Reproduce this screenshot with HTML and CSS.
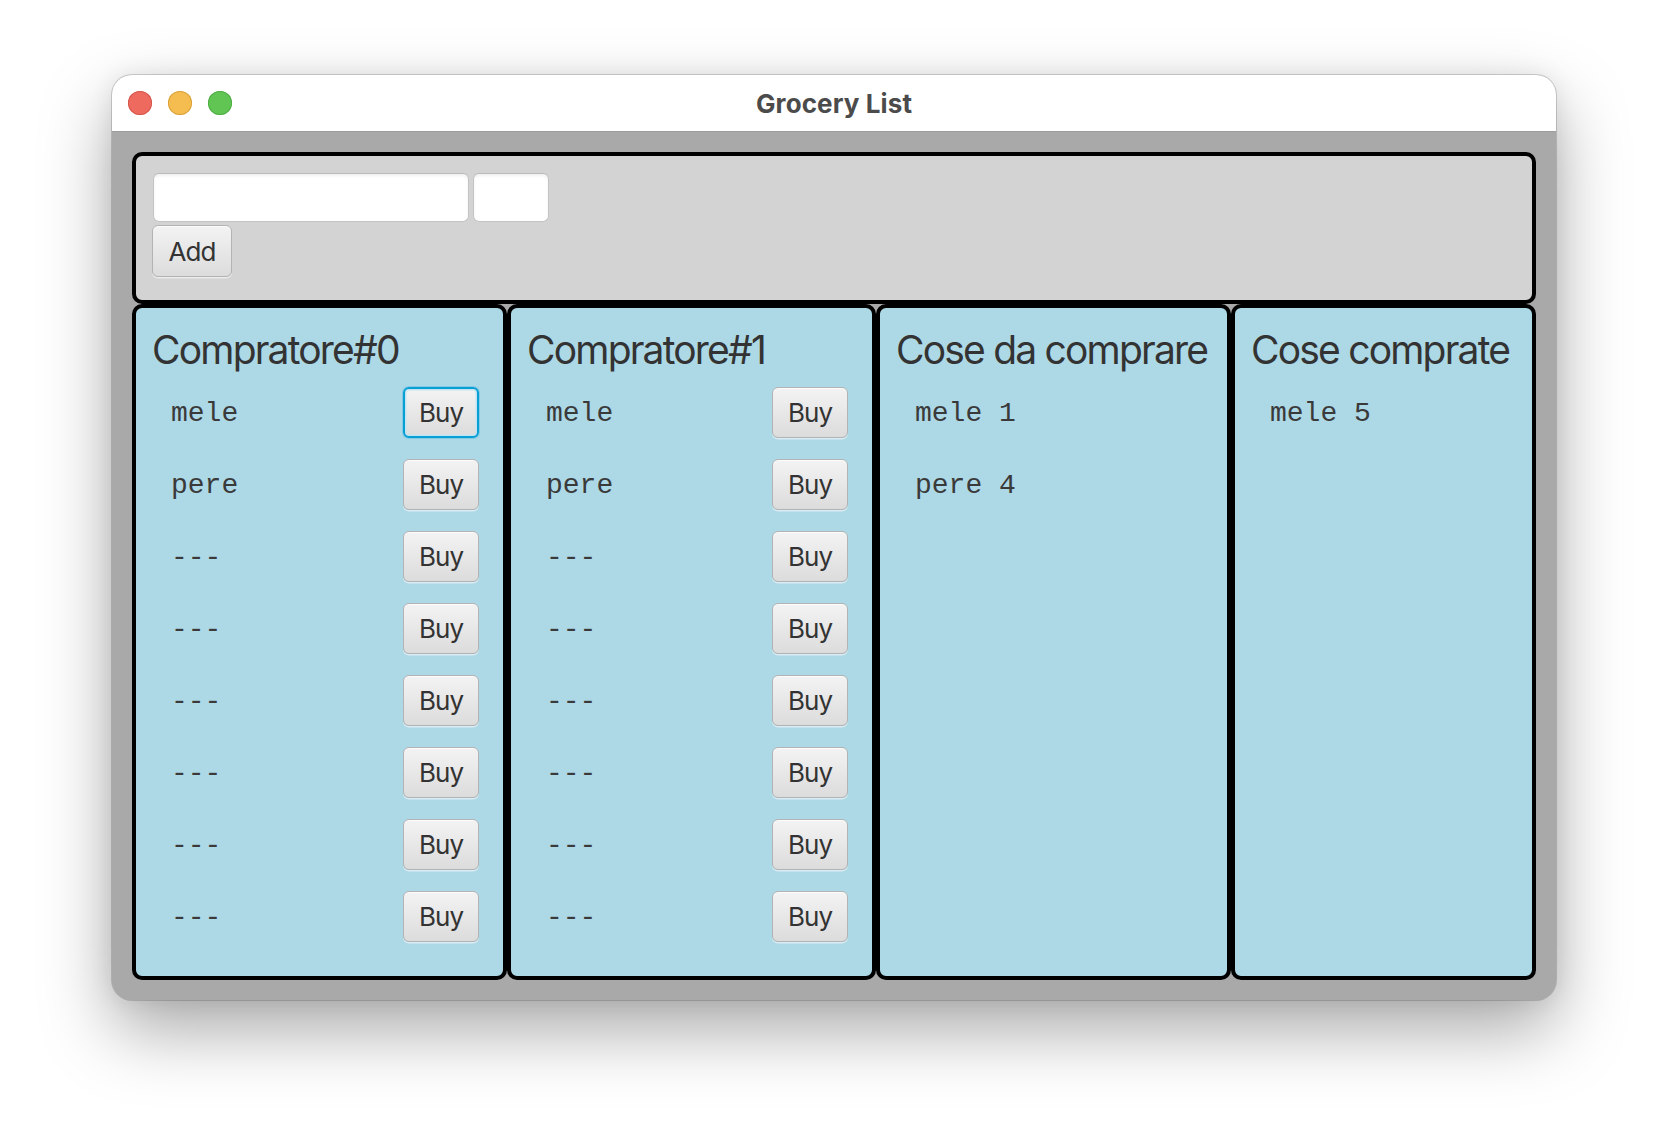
FILE: index.html
```
<!DOCTYPE html>
<html lang="it">
<head>
<meta charset="utf-8">
<title>Grocery List</title>
<link rel="stylesheet" href="styles.css">
</head>
<body>
<div class="window">
  <div class="titlebar">
    <div class="lights">
      <span class="light light-red"></span>
      <span class="light light-yellow"></span>
      <span class="light light-green"></span>
    </div>
    <div class="window-title">Grocery List</div>
    <div class="titlebar-spacer"></div>
  </div>
  <div class="content">
    <div class="top-panel">
      <div class="fields">
        <input class="field field-name" type="text">
        <input class="field field-qty" type="text">
      </div>
      <button class="btn btn-add">Add</button>
    </div>
    <div class="columns">
      <section class="panel panel-buyer0">
        <h2 class="panel-title">Compratore#0</h2>
        <div class="rows">
          <div class="row"><span class="item">mele</span><button class="btn btn-buy btn-focused">Buy</button></div>
          <div class="row"><span class="item">pere</span><button class="btn btn-buy">Buy</button></div>
          <div class="row"><span class="item">---</span><button class="btn btn-buy">Buy</button></div>
          <div class="row"><span class="item">---</span><button class="btn btn-buy">Buy</button></div>
          <div class="row"><span class="item">---</span><button class="btn btn-buy">Buy</button></div>
          <div class="row"><span class="item">---</span><button class="btn btn-buy">Buy</button></div>
          <div class="row"><span class="item">---</span><button class="btn btn-buy">Buy</button></div>
          <div class="row"><span class="item">---</span><button class="btn btn-buy">Buy</button></div>
        </div>
      </section>
      <section class="panel panel-buyer1">
        <h2 class="panel-title">Compratore#1</h2>
        <div class="rows">
          <div class="row"><span class="item">mele</span><button class="btn btn-buy">Buy</button></div>
          <div class="row"><span class="item">pere</span><button class="btn btn-buy">Buy</button></div>
          <div class="row"><span class="item">---</span><button class="btn btn-buy">Buy</button></div>
          <div class="row"><span class="item">---</span><button class="btn btn-buy">Buy</button></div>
          <div class="row"><span class="item">---</span><button class="btn btn-buy">Buy</button></div>
          <div class="row"><span class="item">---</span><button class="btn btn-buy">Buy</button></div>
          <div class="row"><span class="item">---</span><button class="btn btn-buy">Buy</button></div>
          <div class="row"><span class="item">---</span><button class="btn btn-buy">Buy</button></div>
        </div>
      </section>
      <section class="panel panel-todo">
        <h2 class="panel-title">Cose da comprare</h2>
        <div class="rows">
          <div class="row"><span class="item">mele 1</span></div>
          <div class="row"><span class="item">pere 4</span></div>
        </div>
      </section>
      <section class="panel panel-done">
        <h2 class="panel-title">Cose comprate</h2>
        <div class="rows">
          <div class="row"><span class="item">mele 5</span></div>
        </div>
      </section>
    </div>
  </div>
</div>
</body>
</html>
```
FILE: styles.css
```
* {
  box-sizing: border-box;
}

html, body {
  margin: 0;
  background: #ffffff;
}

body {
  padding: 75px 0 0 112px;
  height: 1148px;
  overflow: hidden;
  font-family: Inter, "Noto Sans", sans-serif;
}

.window {
  width: 1444px;
  height: 925px;
  border-radius: 20px;
  overflow: hidden;
  background: #a9a9a9;
  box-shadow: 0 0 0 1px rgba(0, 0, 0, 0.16), 0 30px 70px rgba(0, 0, 0, 0.34), 0 0 24px rgba(0, 0, 0, 0.08);
}

.titlebar {
  height: 57px;
  background: #ffffff;
  border-bottom: 1px solid #9c9c9c;
  display: grid;
  grid-template-columns: 1fr auto 1fr;
  align-items: center;
  padding: 0 16px;
}

.lights {
  display: flex;
  gap: 16px;
}

.light {
  width: 24px;
  height: 24px;
  border-radius: 50%;
}

.light-red {
  background: #ee6a5f;
  box-shadow: inset 0 0 0 1px #d5574c;
}

.light-yellow {
  background: #f5bd4f;
  box-shadow: inset 0 0 0 1px #d9a23c;
}

.light-green {
  background: #61c554;
  box-shadow: inset 0 0 0 1px #4fad43;
}

.window-title {
  font-size: 26px;
  font-weight: 700;
  letter-spacing: 0.1px;
  color: #4b4b4b;
}

.content {
  padding: 20px;
}

.top-panel {
  height: 152px;
  background: #d3d3d3;
  border: 4px solid #000000;
  border-radius: 10px;
  padding: 17px 17px 0 16px;
  display: flex;
  flex-direction: column;
  align-items: flex-start;
  gap: 3px;
}

.fields {
  display: flex;
  gap: 4px;
  padding-left: 1px;
}

.field {
  height: 49px;
  margin: 0;
  border: 1px solid #c4c4c4;
  border-top-color: #b8b8b8;
  border-radius: 6px;
  background: #ffffff;
  box-shadow: inset 0 2px 3px rgba(0, 0, 0, 0.06);
  outline: none;
  font-family: Inter, sans-serif;
  font-size: 26px;
}

.field-name {
  width: 316px;
}

.field-qty {
  width: 76px;
}

.columns {
  display: flex;
  height: 676px;
}

.panel {
  flex: none;
  background: #add8e6;
  border: 4px solid #000000;
  border-radius: 10px;
  padding: 18px 24px 0 16px;
}

.panel-buyer0 { width: 375px; }
.panel-buyer1 { width: 369px; }
.panel-todo { width: 355px; }
.panel-done { width: 305px; }

.panel-title {
  margin: 0 0 14px 0;
  font-size: 39px;
  font-weight: 400;
  line-height: 47px;
  letter-spacing: -1.8px;
  color: #333333;
  white-space: nowrap;
}

.rows {
  display: flex;
  flex-direction: column;
  gap: 21px;
}

.row {
  height: 51px;
  display: flex;
  align-items: center;
  justify-content: space-between;
  padding-left: 19px;
}

.item {
  font-family: "Courier New", Courier, "Liberation Mono", monospace;
  font-size: 28px;
  color: #3a3a3a;
  white-space: pre;
  position: relative;
  top: 1px;
}

.btn {
  margin: 0;
  padding: 0;
  font-family: Inter, "Noto Sans", sans-serif;
  font-size: 26px;
  letter-spacing: -1px;
  color: #333333;
  border: 1px solid #b3b3b3;
  border-radius: 6px;
  background: linear-gradient(#f3f3f3, #dcdcdc);
  box-shadow: 0 1.5px 0 rgba(255, 255, 255, 0.55), inset 0 1px 0 rgba(255, 255, 255, 0.7);
  display: flex;
  align-items: center;
  justify-content: center;
}

.btn-buy {
  width: 76px;
  height: 51px;
}

.btn-add {
  width: 80px;
  height: 52px;
}

.btn-focused {
  border: 2.5px solid #089fd6;
  box-shadow: inset 0 0 0 1.5px #c3e4f1, 0 0 0 1px rgba(8, 159, 214, 0.25);
}
```
